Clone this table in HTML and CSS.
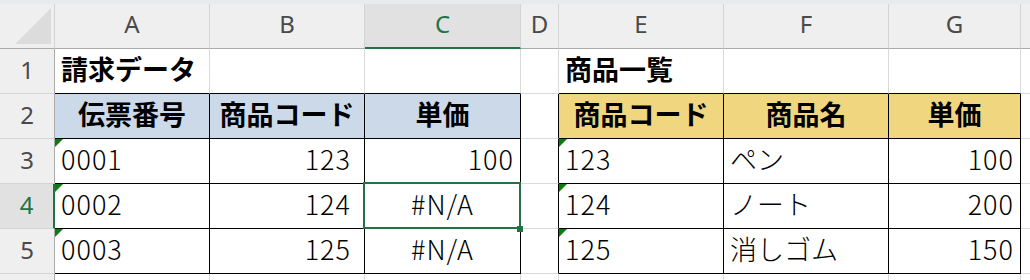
FILE: index.html
```html
<!DOCTYPE html>
<html lang="ja">
    <head>
        <meta charset="UTF-8">
        <title>請求データ</title>
        <link rel="stylesheet" href="styles.css">
    </head>
    <body>
        <div class="sheet">
            <!-- column headers -->
            <div class="col-h corner">
                <svg width="54" height="44" viewBox="0 0 54 44"><polygon points="15,40 51,4 51,40" fill="#dcdcdc"/></svg>
            </div>
            <div class="col-h">A</div>
            <div class="col-h">B</div>
            <div class="col-h active">C</div>
            <div class="col-h">D</div>
            <div class="col-h">E</div>
            <div class="col-h">F</div>
            <div class="col-h">G</div>
            <div class="col-h"></div>

            <!-- row 1: titles -->
            <div class="row-h">1</div>
            <div class="cell bb title">請求データ</div>
            <div class="cell bb"></div>
            <div class="cell bb"></div>
            <div class="cell"></div>
            <div class="cell bb title">商品一覧</div>
            <div class="cell bb"></div>
            <div class="cell bb"></div>
            <div class="cell"></div>

            <!-- row 2: table headings -->
            <div class="row-h">2</div>
            <div class="cell bb br ctr hd-blue">伝票番号</div>
            <div class="cell bb br ctr hd-blue">商品コード</div>
            <div class="cell bb br ctr hd-blue">単価</div>
            <div class="cell br"></div>
            <div class="cell bb br ctr hd-gold">商品コード</div>
            <div class="cell bb br ctr hd-gold">商品名</div>
            <div class="cell bb br ctr hd-gold">単価</div>
            <div class="cell"></div>

            <div class="row-h">3</div>
            <div class="cell bb br flag digits">0001</div>
            <div class="cell bb br num pad-b">123</div>
            <div class="cell bb br num">100</div>
            <div class="cell br"></div>
            <div class="cell bb br flag digits">123</div>
            <div class="cell bb br">ペン</div>
            <div class="cell bb br num">100</div>
            <div class="cell"></div>

            <div class="row-h active">4</div>
            <div class="cell bb br flag digits">0002</div>
            <div class="cell bb br num pad-b">124</div>
            <div class="cell bb br ctr digits selected">#N/A</div>
            <div class="cell br"></div>
            <div class="cell bb br flag digits">124</div>
            <div class="cell bb br">ノート</div>
            <div class="cell bb br num">200</div>
            <div class="cell"></div>

            <div class="row-h">5</div>
            <div class="cell bb br flag digits">0003</div>
            <div class="cell bb br num pad-b">125</div>
            <div class="cell bb br ctr digits">#N/A</div>
            <div class="cell br"></div>
            <div class="cell bb br flag digits">125</div>
            <div class="cell bb br">消しゴム</div>
            <div class="cell bb br num">150</div>
            <div class="cell"></div>

            <!-- next row, mostly below the fold -->
            <div class="row-h"></div>
            <div class="cell"></div>
            <div class="cell"></div>
            <div class="cell"></div>
            <div class="cell"></div>
            <div class="cell"></div>
            <div class="cell"></div>
            <div class="cell"></div>
            <div class="cell"></div>
        </div>
    </body>
</html>
```

FILE: styles.css
```css
* {
    margin: 0;
    padding: 0;
    box-sizing: border-box;
}

body {
    overflow: hidden;
    padding-top: 4px;
    background-color: #e7eaee;
}

.sheet {
    display: grid;
    grid-template-columns: 55px 155px 155px 156px 38px 165px 165px 132px 1fr;
    grid-template-rows: repeat(7, 45px);
    background-color: white;
}

/* headers */
.col-h, .row-h {
    display: flex;
    align-items: center;
    justify-content: center;
    font: 24px "Noto Sans", sans-serif;
    color: #4a4a4a;
    background-color: #efefef;
}

.col-h {
    padding-bottom: 5px;
    border-right: 1px solid #d4d4d4;
    border-bottom: 1px solid #ababab;
}

.corner {
    padding-bottom: 0;
}

.row-h {
    padding-bottom: 3px;
    border-right: 1px solid #ababab;
    border-bottom: 1px solid #d4d4d4;
}

.corner svg {
    display: block;
}

.col-h.active {
    color: #217346;
    background-color: #e1e1e1;
    border-bottom: 2px solid #217346;
}

.row-h.active {
    color: #217346;
    background-color: #e1e1e1;
    border-right: 2px solid #217346;
}

/* cells */
.cell {
    position: relative;
    display: flex;
    align-items: center;
    padding: 0 6px 5px;
    white-space: nowrap;
    font: 300 27px "Noto Sans CJK JP", sans-serif;
    color: #000;
    border-right: 1px solid #d9d9d9;
    border-bottom: 1px solid #d9d9d9;
}

.bb {border-bottom-color: #000;}
.br {border-right-color: #000;}

.num {
    justify-content: flex-end;
    letter-spacing: 1px;
}
.ctr {justify-content: center;}
.digits {letter-spacing: 1px;}
.pad-b {padding-right: 13px;}

.title, .hd-blue, .hd-gold {
    font-weight: bold;
    color: #000;
}

.hd-blue {background-color: #ccd9e8;}
.hd-gold {background-color: #f0d77f;}

/* green error marker in the corner */
.flag::before {
    content: "";
    position: absolute;
    top: 0;
    left: 0;
    border-top: 8px solid #0b7d0b;
    border-right: 8px solid transparent;
}

.selected::after {
    content: "";
    position: absolute;
    top: -2px;
    left: -2px;
    right: -1px;
    bottom: -1px;
    border: 2px solid #217346;
}

.selected::before {
    content: "";
    position: absolute;
    right: -3px;
    bottom: -4px;
    width: 6px;
    height: 6px;
    background-color: #217346;
    z-index: 1;
}
```
